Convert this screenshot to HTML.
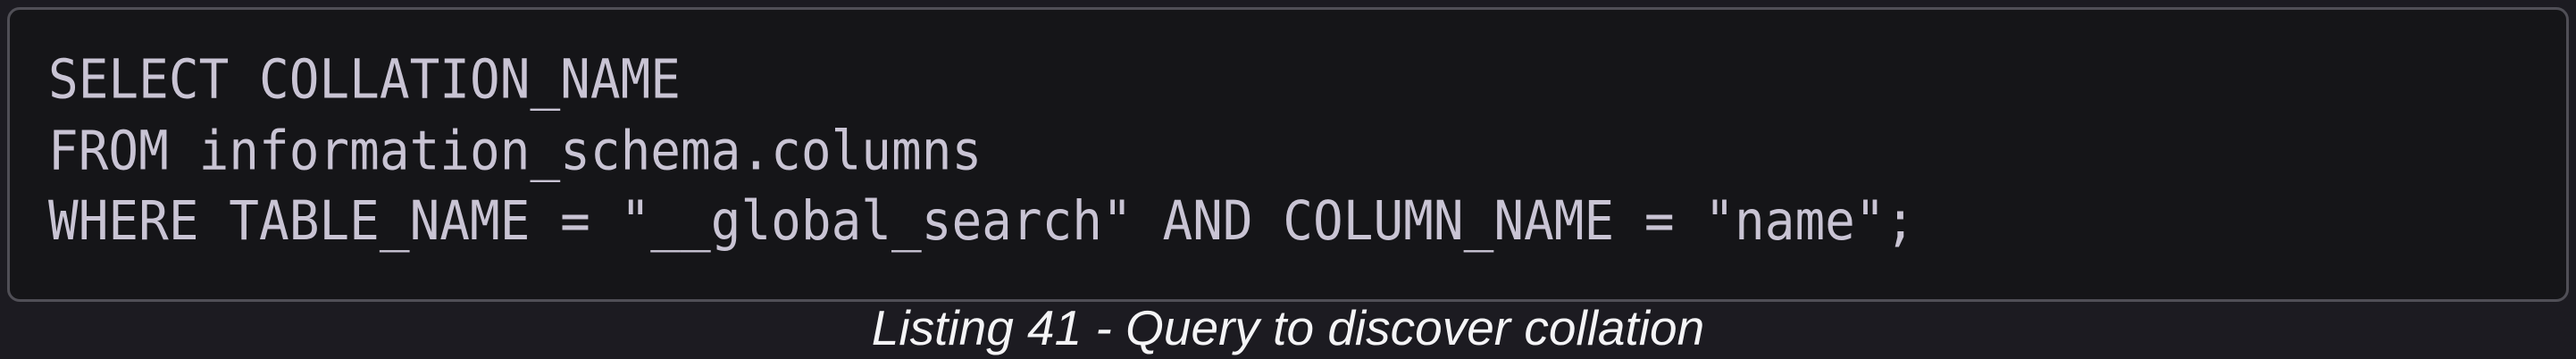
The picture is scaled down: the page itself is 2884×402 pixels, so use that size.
<!DOCTYPE html>
<html><head><style>
html,body{margin:0;padding:0;width:2884px;height:402px;background:#1c1b21;overflow:hidden}
.box{position:absolute;left:8px;top:8px;width:2862px;height:324px;background:#151518;border:3px solid #504f56;border-radius:14px;box-sizing:content-box}
pre{position:absolute;left:54px;top:50px;margin:0;font-family:"DejaVu Sans Mono","Liberation Mono",monospace;font-size:56px;line-height:73.5px;color:#c9c4d4;transform:scaleY(1.08);transform-origin:0 0}
.cap{position:absolute;left:0;width:2884px;top:336px;text-align:center;font-family:"Liberation Sans",sans-serif;font-style:italic;font-size:55px;line-height:62px;color:#f4f4f6}
</style></head><body>
<div class="box"></div>
<pre>SELECT COLLATION_NAME
FROM information_schema.columns
WHERE TABLE_NAME = "__global_search" AND COLUMN_NAME = "name";</pre>
<div class="cap">Listing 41 - Query to discover collation</div>
</body></html>
